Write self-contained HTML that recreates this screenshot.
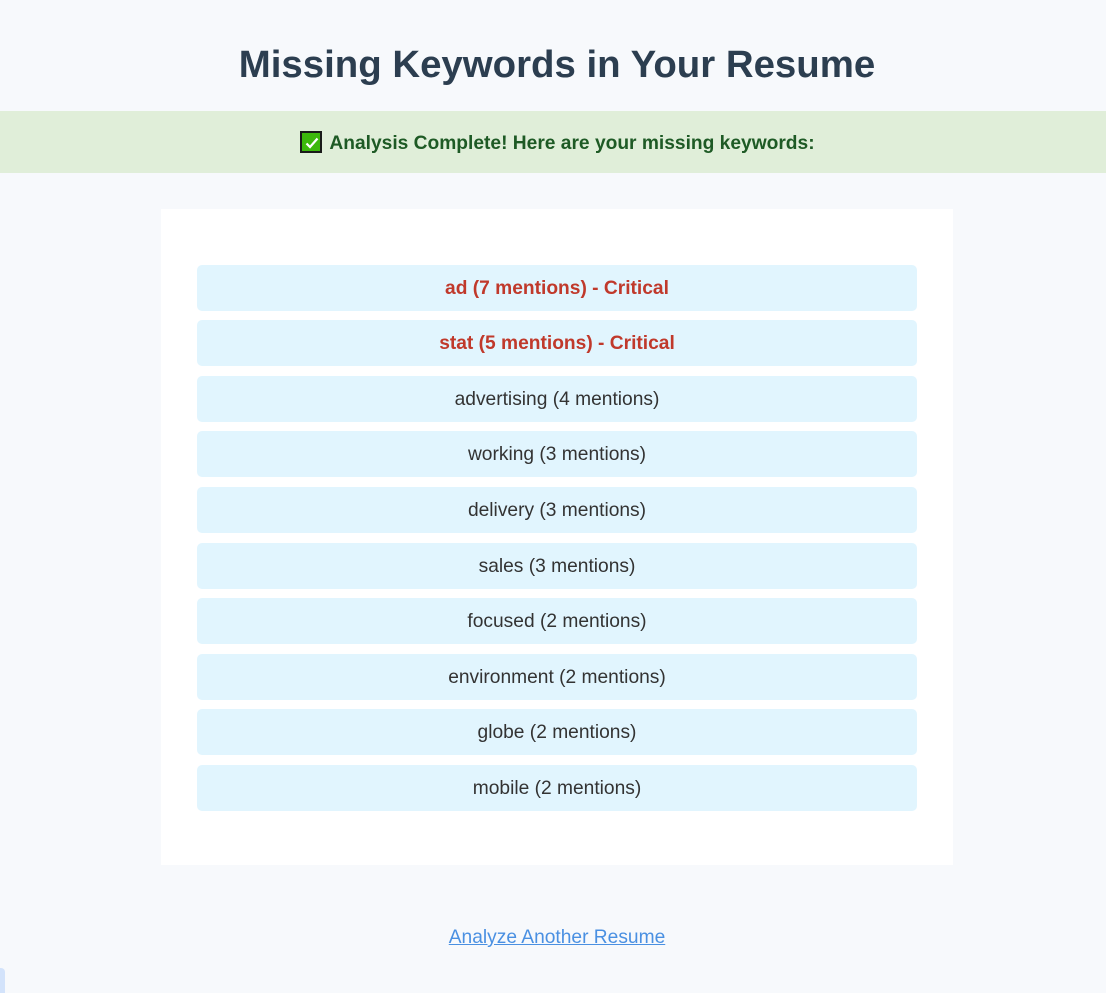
<!DOCTYPE html>
<html><head><meta charset="utf-8"><style>
body{margin:0;background:#f7f9fc;font-family:"Liberation Sans",Arial,sans-serif;width:1106px;height:993px;overflow:hidden;position:relative}
h1{margin:0;position:absolute;top:42px;left:4px;width:1106px;text-align:center;font-size:38.4px;line-height:46px;color:#2c3e50;font-weight:bold}
.banner{position:absolute;top:111px;left:0;width:1106px;height:62px;background:#e0eed9;color:#1e5a25;font-weight:bold;font-size:19.2px;line-height:66px;text-align:center;box-sizing:border-box;padding-left:9px}
.chk{display:inline-block;width:22px;height:22px;background:#3cb80c;border:2px solid #1a1a1a;box-sizing:border-box;vertical-align:-4px;margin-right:7px;position:relative}
.chk svg{position:absolute;left:1px;top:1px}
.card{position:absolute;top:209px;left:161px;width:792px;height:656px;background:#fff}
.item{position:absolute;left:36px;width:720px;height:46px;background:#e1f5fe;border-radius:5px;text-align:center;line-height:48px;font-size:19.2px;color:#333}
.crit{color:#c0392b;font-weight:bold}
a{position:absolute;top:927px;left:4px;width:1106px;text-align:center;color:#4a90e2;font-size:19.2px;line-height:22px}
a span{text-decoration:underline}
.tab{position:absolute;left:0;top:968px;width:5px;height:25px;background:#d3e3fb;border-radius:0 4px 0 0}
</style></head><body>
<h1>Missing Keywords in Your Resume</h1>
<div class="banner"><span class="chk"><svg width="18" height="18" viewBox="0 0 18 18"><path d="M3.5 9.5 L7 13 L14.5 4.5" stroke="#fff" stroke-width="2.2" fill="none"/></svg></span>Analysis Complete! Here are your missing keywords:</div>
<div class="card">
<div class="item crit" style="top:56px">ad (7 mentions) - Critical</div>
<div class="item crit" style="top:111px">stat (5 mentions) - Critical</div>
<div class="item" style="top:167px">advertising (4 mentions)</div>
<div class="item" style="top:222px">working (3 mentions)</div>
<div class="item" style="top:278px">delivery (3 mentions)</div>
<div class="item" style="top:334px">sales (3 mentions)</div>
<div class="item" style="top:389px">focused (2 mentions)</div>
<div class="item" style="top:445px">environment (2 mentions)</div>
<div class="item" style="top:500px">globe (2 mentions)</div>
<div class="item" style="top:556px">mobile (2 mentions)</div>
</div>
<a><span>Analyze Another Resume</span></a>
<div class="tab"></div>
</body></html>
